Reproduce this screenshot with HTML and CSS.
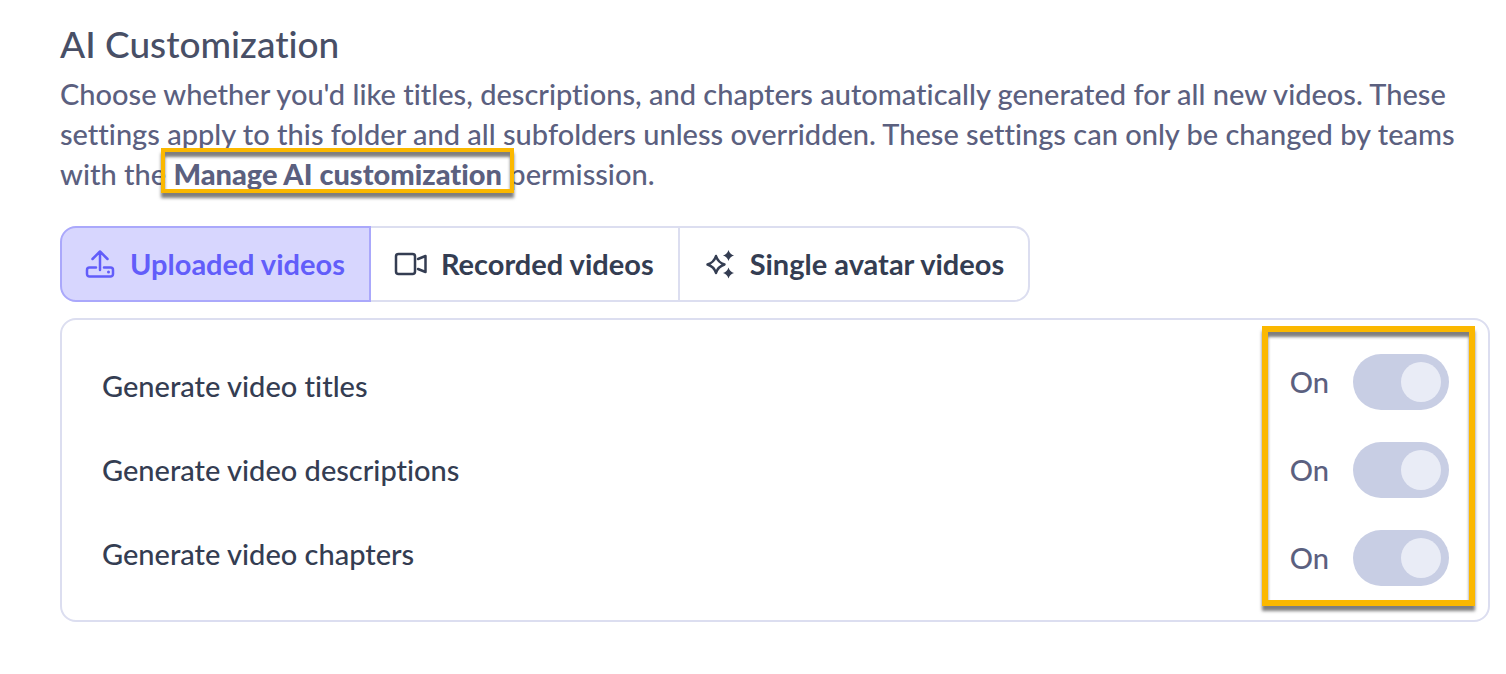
FILE: index.html
```html
<!DOCTYPE html>
<html lang="en">
<head>
  <meta charset="UTF-8" />
  <title>AI Customization</title>
  <link rel="stylesheet" href="styles.css">
</head>
<body>
  <main class="settings">
    <h2 class="title">AI Customization</h2>
    <p class="description">
      Choose whether you'd like titles, descriptions, and chapters automatically generated for all new videos. These
      settings apply to this folder and all subfolders unless overridden. These settings can only be changed by teams
      with the <strong class="permission">Manage AI customization</strong> permission.
    </p>

    <div class="tabs" role="tablist">
      <button class="tab active" type="button" role="tab" aria-selected="true">
        <svg class="icon" viewBox="0 0 32 32" aria-hidden="true">
          <path d="M16 22V3.500M8.500 11L16 3.500l7.500 7.500M12 19.500H5.500a2.500 2.500 0 0 0-2.500 2.500v4a2.500 2.500 0 0 0 2.500 2.500h21a2.500 2.500 0 0 0 2.500-2.500v-4a2.500 2.500 0 0 0-2.500-2.500h-6.500" />
          <circle class="solid" cx="24.500" cy="24" r="1.500" />
        </svg>
        Uploaded videos
      </button>
      <button class="tab" type="button" role="tab" aria-selected="false">
        <svg class="icon" viewBox="0 0 32 32" aria-hidden="true">
          <rect x="1" y="6" width="19" height="20" rx="2.500" />
          <path d="M23 11l7.500-3v16l-7.500-3" />
        </svg>
        Recorded videos
      </button>
      <button class="tab" type="button" role="tab" aria-selected="false">
        <svg class="icon" viewBox="0 0 32 32" aria-hidden="true">
          <path d="M12 8q2 6.500 8.500 8.500q-6.500 2-8.500 8.500q-2-6.500-8.500-8.500q6.500-2 8.500-8.500z" />
          <path class="solid" d="M24.500 2q1.300 4.200 5.500 5.500q-4.200 1.300-5.500 5.500q-1.300-4.200-5.500-5.500q4.200-1.300 5.500-5.500z" />
          <path class="solid" d="M24.500 19.500q1.300 4.200 5.500 5.500q-4.200 1.300-5.500 5.500q-1.300-4.200-5.500-5.500q4.200-1.300 5.500-5.500z" />
        </svg>
        Single avatar videos
      </button>
    </div>

    <section class="card">
      <div class="labels">
        <label for="titles">Generate video titles</label>
        <label for="descriptions">Generate video descriptions</label>
        <label for="chapters">Generate video chapters</label>
      </div>
      <div class="switches">
        <div class="switch-row">On <input class="switch" id="titles" type="checkbox" role="switch" checked disabled></div>
        <div class="switch-row">On <input class="switch" id="descriptions" type="checkbox" role="switch" checked disabled></div>
        <div class="switch-row">On <input class="switch" id="chapters" type="checkbox" role="switch" checked disabled></div>
      </div>
    </section>
  </main>
</body>
</html>
```

FILE: styles.css
```css
* {
  box-sizing: border-box;
}
body {
  margin: 0;
  background: #fff;
  color: #343d52;
  font-family: Lato, "Open Sans", sans-serif;
  font-size: 29px;
  font-weight: 500;
  font-variant-ligatures: none;
  line-height: 40px;
}
.settings {
  padding: 20px 16px 52px 60px;
}
.title {
  margin: 0 0 6px;
  color: #484f66;
  font-size: 37px;
  font-weight: 500;
  line-height: 48px;
}
.description {
  margin: 0;
  padding-right: 24px;
  color: #5b607f;
}

/* outlined callouts */
.permission {
  position: relative;
  font-weight: 900;
}
.permission::after,
.switches::after {
  content: "";
  position: absolute;
  border: 4px solid #fbb800;
  box-shadow: 0 5px 3px rgba(0, 0, 0, 0.5), inset 0 5px 3px rgba(0, 0, 0, 0.5);
}
.permission::after {
  inset: -8px -12px -2px -12px;
}
.switches::after {
  inset: -28px -26px -20px -28px;
  border-width: 6px;
}

.tabs {
  display: flex;
  width: fit-content;
  margin: 32px 0 16px;
}
.tab {
  display: flex;
  align-items: center;
  gap: 14px;
  height: 76px;
  padding: 0 24px;
  border: 2px solid #dcdef0;
  border-left-width: 0;
  background: #fff;
  color: #343d52;
  font: inherit;
  font-variant-ligatures: none;
  font-weight: 700;
}
.tab:last-child {
  border-radius: 0 16px 16px 0;
}
.tab.active {
  padding-left: 22px;
  border: 2px solid #aaa8fb;
  border-radius: 16px 0 0 16px;
  background: #d7d6fe;
  color: #625dfa;
}
.icon {
  width: 32px;
  height: 32px;
  overflow: visible;
  fill: none;
  stroke: currentColor;
  stroke-width: 2.5;
  stroke-linecap: round;
  stroke-linejoin: round;
}
.icon .solid {
  fill: currentColor;
  stroke: none;
}

.card {
  display: flex;
  align-items: center;
  justify-content: space-between;
  padding: 34px 39px 34px 40px;
  border: 2px solid #dcdef0;
  border-radius: 16px;
}
.labels {
  display: flex;
  flex-direction: column;
  gap: 44px;
}
.switches {
  position: relative;
  display: flex;
  flex-direction: column;
  gap: 32px;
  color: #5b607f;
}
.switch-row {
  display: flex;
  align-items: center;
  gap: 24px;
}
.switch {
  appearance: none;
  width: 96px;
  height: 56px;
  margin: 0;
  padding: 8px;
  border-radius: 28px;
  background: #c8cee4;
}
.switch::before {
  content: "";
  display: block;
  width: 40px;
  height: 40px;
  margin-left: auto;
  border-radius: 50%;
  background: #e9ecf6;
}
```
